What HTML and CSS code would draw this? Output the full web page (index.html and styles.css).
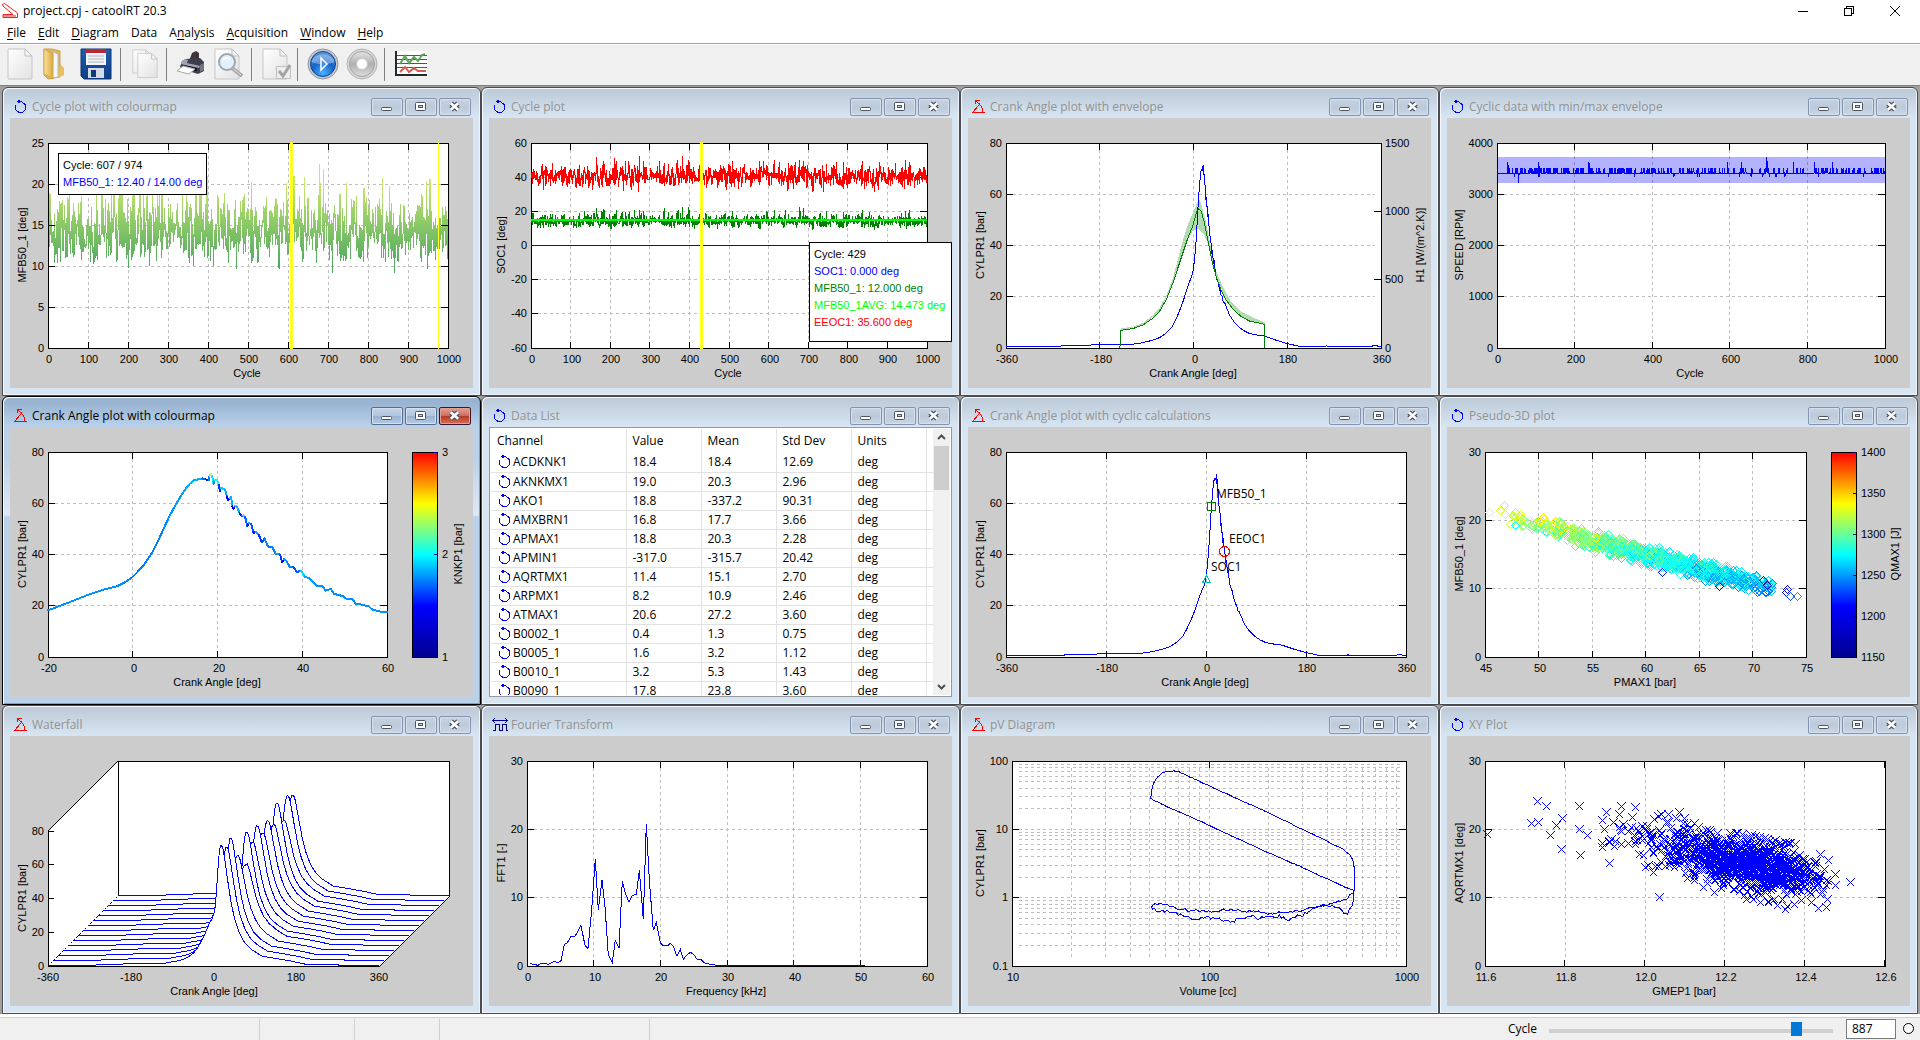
FILE: index.html
```html
<!DOCTYPE html>
<html lang="en">
<head>
<meta charset="utf-8">
<title>project.cpj - catoolRT 20.3</title>
<link rel="stylesheet" href="styles.css">
</head>
<body>
<svg class="defs" aria-hidden="true">
  <defs>
    <linearGradient id="paper" x1="0" y1="0" x2="1" y2="1"><stop offset="0" stop-color="#fff"/><stop offset="1" stop-color="#e2e2e2"/></linearGradient>
    <linearGradient id="gold" x1="0" y1="0" x2="1" y2="0"><stop offset="0" stop-color="#fbe3a0"/><stop offset="1" stop-color="#d9a83c"/></linearGradient>
    <linearGradient id="disk" x1="0" y1="0" x2="0" y2="1"><stop offset="0" stop-color="#1f5fae"/><stop offset="1" stop-color="#0d3c86"/></linearGradient>
    <radialGradient id="blueball" cx=".5" cy=".85" r=".9"><stop offset="0" stop-color="#4bb4ff"/><stop offset=".5" stop-color="#1463c8"/><stop offset="1" stop-color="#6ca6e6"/></radialGradient>
    <linearGradient id="greyball" x1="0" y1="0" x2="0" y2="1"><stop offset="0" stop-color="#e4e4e4"/><stop offset=".5" stop-color="#b0b0b0"/><stop offset="1" stop-color="#dcdcdc"/></linearGradient>
    <linearGradient id="jet" x1="0" y1="1" x2="0" y2="0"><stop offset="0" stop-color="#000090"/><stop offset=".25" stop-color="#00f"/><stop offset=".5" stop-color="#0ff"/><stop offset=".75" stop-color="#ff0"/><stop offset="1" stop-color="#f00"/></linearGradient>
    <symbol id="i-cycle" viewBox="0 0 16 16"><path d="M7.500 .5L4.500 2.500l3 2M5 2.500h3.500L12.500 6v4.500l-3 3H6l-3.500-3v-5" fill="none" stroke="#00f"/></symbol>
    <symbol id="i-crank" viewBox="0 0 16 16"><path d="M1 13.500h13M2 13l7-8.500M4.500 5v-3.500h4M5 2l5 5M9.500 6l2 4v3" fill="none" stroke="#f00"/></symbol>
    <symbol id="i-fft" viewBox="0 0 16 16"><path d="M.5 3.500h15M3 1L.5 3.500 3 6M13 1l2.500 2.500L13 6M1 13.500h2.500v-6h4v6h3v-6h4v6H16" fill="none" stroke="#000090"/></symbol>
    <symbol id="i-min" viewBox="0 0 16 16"><rect x="2.500" y="8.500" width="10" height="3" rx="1" fill="#fff" stroke="#4b5365"/></symbol>
    <symbol id="i-max" viewBox="0 0 16 16"><rect x="2.500" y="3.500" width="10" height="8" rx="1" fill="#fff" stroke="#4b5365"/><rect x="5.500" y="6.500" width="4" height="2" fill="#c4d2e2" stroke="#4b5365"/></symbol>
    <symbol id="i-close" viewBox="0 0 16 16"><path d="M4 4.500l7 6M11 4.500l-7 6" stroke="#4b5365" stroke-width="5"/><path d="M3.800 4.300l7.400 6.400M11.200 4.300l-7.400 6.400" stroke="#fff" stroke-width="2.600"/></symbol>
    <symbol id="i-page" viewBox="0 0 26 32"><path d="M1 1h17l7 7v23H1z" fill="url(#paper)" stroke="#c6c6c6"/><path d="M18 1v7h7z" fill="#f6f6f6" stroke="#bdbdbd"/></symbol>
  </defs>
</svg>

<header class="titlebar">
  <svg class="app-icon" viewBox="0 0 16 16"><path d="M.5 1.500l2-1L15.500 10v4.500H1v-3h10L1 3z" fill="#fff" stroke="#f02020"/><path d="M1 13h13" stroke="#f02020"/></svg>
  <h1>project.cpj - catoolRT 20.3</h1>
  <div class="caption">
    <button type="button" aria-label="Minimize"><svg viewBox="0 0 12 12"><path d="M1 6.500h10" stroke="#000"/></svg></button>
    <button type="button" aria-label="Restore"><svg viewBox="0 0 12 12"><path d="M1.500 3.500h7v7h-7zM3.500 3V1.500h7v7H9" fill="none" stroke="#000"/></svg></button>
    <button type="button" aria-label="Close"><svg viewBox="0 0 12 12"><path d="M1 1l10 10M11 1L1 11" stroke="#000"/></svg></button>
  </div>
</header>

<nav class="menubar">
  <button type="button"><u>F</u>ile</button><button type="button"><u>E</u>dit</button><button type="button"><u>D</u>iagram</button><button type="button">Data</button><button type="button">A<u>n</u>alysis</button><button type="button"><u>A</u>cquisition</button><button type="button"><u>W</u>indow</button><button type="button"><u>H</u>elp</button>
</nav>

<div class="toolbar">
  <button type="button" aria-label="New"><svg viewBox="0 0 32 32"><use href="#i-page" x="3" y="0" width="26" height="32"/></svg></button>
  <button type="button" aria-label="Open"><svg viewBox="0 0 32 32"><path d="M3 1h8l8 2v26l-12 2-4-4z" fill="#e0b656" stroke="#c9a24a"/><path d="M12 4l5 2v23l-6 1z" fill="#f3f6fb" stroke="#b6bcc8"/><path d="M3 1l9 5v25l-9-5z" fill="url(#gold)" stroke="#d0a648"/><path d="M19 16l4 4v7l-6 3z" fill="#e9c060"/></svg></button>
  <button type="button" aria-label="Save" class="wide"><svg viewBox="0 0 32 32"><path d="M1 1h30v30H4l-3-3z" fill="url(#disk)" stroke="#0c3474"/><path d="M6 1h20v16H6z" fill="#f2f4f6"/><path d="M6 1h20v4H6z" fill="#b52a35"/><path d="M8 8h16M8 11h16M8 14h16" stroke="#b0b5bb"/><path d="M8 20h16v10H8z" fill="#d3dbe4"/><path d="M11 22h5v7h-5z" fill="#123a78"/></svg></button>
  <i></i>
  <button type="button" aria-label="Copy"><svg viewBox="0 0 32 32"><use href="#i-page" x="3" y="1" width="20" height="25"/><use href="#i-page" x="8" y="4" width="21" height="27"/></svg></button>
  <i></i>
  <button type="button" aria-label="Print"><svg viewBox="0 0 32 32"><path d="M14 13L17 5l4-2 3 2v8z" fill="#44333a"/><path d="M7 13l4-2 14-1 4 4v9l-6 3-13-4-5-3z" fill="#3c3f49"/><path d="M7 13l3-2 3 1-1 3 13 3-1 2-14-3-4-1z" fill="#9da4b4"/><path d="M8 17l14 3v3H8z" fill="#15171c"/><path d="M8 18l12 3-6 5-12-3z" fill="#fff" stroke="#a8a8a8"/><path d="M25 17l4-2v7l-4 2z" fill="#707684"/></svg></button>
  <button type="button" aria-label="Print preview" class="round"><svg viewBox="0 0 32 32"><use href="#i-page" x="1" y="0" width="26" height="32"/><path d="M19 20l10 8" stroke="#a8a8a8" stroke-width="4"/><path d="M19 20l9 7" stroke="#e0e0e0"/><circle cx="14" cy="14" r="8" fill="#e4f0fb" stroke="#9da6b2" stroke-width="2"/><path d="M9 13c2-5 7-5 9-1-4-2-6-1-9 1" fill="#fff"/></svg></button>
  <i></i>
  <button type="button" aria-label="Validate"><svg viewBox="0 0 32 32"><use href="#i-page" x="2" y="0" width="26" height="32"/><path d="M16.500 18.500h14v12h-14z" fill="#eee" stroke="#c0c0c0"/><path d="M19 23l4 5 7-11" fill="none" stroke="#a4a4a4" stroke-width="3"/></svg></button>
  <i></i>
  <button type="button" aria-label="Start" class="round"><svg viewBox="0 0 32 32"><circle cx="16" cy="16" r="15" fill="#c9ccd2" stroke="#8c939e"/><circle cx="16" cy="16" r="12.500" fill="url(#blueball)" stroke="#0c3d8c"/><path d="M4.500 14C7 4 25 4 27.500 14 20 17 12 17 4.500 14z" fill="#fff" opacity=".35"/><path d="M14 10v12l6-6z" fill="#3c8de6" stroke="#fff" stroke-width="1.500"/></svg></button>
  <button type="button" aria-label="Stop" class="round"><svg viewBox="0 0 32 32"><circle cx="16" cy="16" r="15" fill="#d8d8d8" stroke="#b4b4b4"/><circle cx="16" cy="16" r="12.500" fill="url(#greyball)" stroke="#a4a4a4"/><circle cx="16" cy="16" r="5.500" fill="#fff" stroke="#c8c8c8"/></svg></button>
  <i></i>
  <button type="button" aria-label="Graph" class="wide"><svg viewBox="0 0 32 32"><path d="M0 3h32v25H0z" fill="#fff"/><path d="M2 7.500h30M2 11.500h30M2 15.500h30M2 19.500h30" stroke="#555"/><path d="M1 3v24h31" fill="none" stroke="#222a30" stroke-width="2"/><path d="M5 16l5-8 4 7 5-6 4 4 4-6 3-1" fill="none" stroke="#58a858" stroke-width="2"/><path d="M5 24l5-5 4 5 5-4 4 3h8" fill="none" stroke="#d86050" stroke-width="2"/></svg></button>
</div>

<main class="desktop" id="desktop">
  <section class="win" data-icon="cycle" data-title="Cycle plot with colourmap"><div class="client"><svg class="plot" id="p1"></svg>
    <div class="tip tip-cursor"><p>Cycle: 607 / 974</p><p class="c-blue">MFB50_1: 12.40 / 14.00 deg</p></div></div></section>
  <section class="win" data-icon="cycle" data-title="Cycle plot"><div class="client"><svg class="plot" id="p2"></svg>
    <div class="tip tip-values"><p>Cycle: 429</p><p class="c-blue">SOC1: 0.000 deg</p><p class="c-green">MFB50_1: 12.000 deg</p><p class="c-lime">MFB50_1AVG: 14.473 deg</p><p class="c-red">EEOC1: 35.600 deg</p></div></div></section>
  <section class="win" data-icon="crank" data-title="Crank Angle plot with envelope"><div class="client"><svg class="plot" id="p3"></svg></div></section>
  <section class="win" data-icon="cycle" data-title="Cyclic data with min/max envelope"><div class="client"><svg class="plot" id="p4"></svg></div></section>
  <section class="win active" data-icon="crank" data-title="Crank Angle plot with colourmap"><div class="client"><svg class="plot" id="p5"></svg></div></section>
  <section class="win" data-icon="cycle" data-title="Data List"><div class="client list">
    <div class="rows"><table>
      <colgroup><col class="c-name"><col class="c-num"><col class="c-num"><col class="c-num"><col class="c-num"><col></colgroup>
      <thead><tr><th>Channel</th><th>Value</th><th>Mean</th><th>Std Dev</th><th>Units</th><td></td></tr></thead>
      <tbody id="channels"></tbody>
    </table></div>
    <div class="scroll"><button type="button" aria-label="Scroll up"><svg viewBox="0 0 17 17"><path d="M5 10l3.500-3.500L12 10" fill="none" stroke="#505050" stroke-width="2"/></svg></button><div class="track"><div class="thumb"></div></div><button type="button" aria-label="Scroll down"><svg viewBox="0 0 17 17"><path d="M5 7l3.500 3.500L12 7" fill="none" stroke="#505050" stroke-width="2"/></svg></button></div>
  </div></section>
  <section class="win" data-icon="crank" data-title="Crank Angle plot with cyclic calculations"><div class="client"><svg class="plot" id="p7"></svg></div></section>
  <section class="win" data-icon="cycle" data-title="Pseudo-3D plot"><div class="client"><svg class="plot" id="p8"></svg></div></section>
  <section class="win" data-icon="crank" data-title="Waterfall"><div class="client"><svg class="plot" id="p9"></svg></div></section>
  <section class="win" data-icon="fft" data-title="Fourier Transform"><div class="client"><svg class="plot" id="p10"></svg></div></section>
  <section class="win" data-icon="crank" data-title="pV Diagram"><div class="client"><svg class="plot" id="p11"></svg></div></section>
  <section class="win" data-icon="cycle" data-title="XY Plot"><div class="client"><svg class="plot" id="p12"></svg></div></section>
</main>

<footer class="status">
  <span class="pane pane-a"></span><span class="pane pane-b"></span><span class="pane pane-c"></span><span class="pane pane-d"></span>
  <div class="cycle-box">
    <label for="cycle">Cycle</label>
    <input type="range" id="cycle" min="0" max="1000" value="887">
    <input type="text" id="cycle-no" value="887" aria-label="Cycle number">
    <input type="radio" aria-label="Follow">
  </div>
</footer>
<script src="app.js"></script>
</body>
</html>
```
FILE: styles.css
```css
* { box-sizing: border-box; }
body {
  margin: 0;
  height: 100vh;
  min-height: 700px;
  display: flex;
  flex-direction: column;
  font: 12px/16px "Open Sans", "Noto Sans", sans-serif;
  color: #000;
  background: #fff;
  overflow: hidden;
}
button { font: inherit; color: inherit; border: 0; background: none; padding: 0; }
.defs { position: absolute; width: 0; height: 0; }

.titlebar { display: flex; align-items: center; height: 22px; padding-left: 2px; gap: 5px; }
.titlebar h1 { flex: 1; margin: 0; font-size: 12px; font-weight: 400; }
.app-icon { width: 16px; height: 16px; }
.caption { display: flex; padding-right: 2px; }
.caption button { width: 46px; height: 22px; display: grid; place-items: center; }
.caption svg { width: 12px; height: 12px; shape-rendering: crispEdges; }

.menubar { display: flex; height: 21px; align-items: center; padding-left: 1px; }
.menubar button { padding: 0 6px; }
.menubar u { text-underline-offset: 2px; }

.toolbar {
  display: flex;
  align-items: center;
  height: 43px;
  padding: 0 1px 2px;
  background: #f0f0f0;
  border-top: 1px solid #a0a0a0;
  box-shadow: inset 0 1px #fff;
}
.toolbar button { width: 37px; height: 36px; display: grid; place-items: center; }
.toolbar button.wide { width: 42px; }
.toolbar button.round { width: 39px; }
.toolbar svg { width: 32px; height: 32px; }
.toolbar i { width: 1px; height: 33px; margin: 0 5px 0 3px; background: #808080; }

.desktop {
  flex: 1;
  min-height: 0;
  display: grid;
  grid-template-columns: repeat(4, minmax(0, 1fr));
  grid-template-rows: repeat(3, minmax(0, 1fr));
  padding: 1px 2px 0;
  background: #a0a0a0;
  border-top: 1px solid #808080;
  margin-top: -1px;
}
.win {
  display: flex;
  flex-direction: column;
  padding: 0 7px 7px;
  border: 1px solid #4c4c50;
  border-radius: 6px 6px 0 0;
  background: linear-gradient(#bfcddb 0, #bfcddb 4px, #d7e4f2 29px, #d7e4f2);
  box-shadow: inset 1px 1px #f4f8fc, inset -1px -1px #eef4fa;
}
.win.active {
  border-color: #000;
  background: linear-gradient(#99b4d1 0, #99b4d1 6px, #b9d1ea 29px, #b9d1ea 60px, #dfe9f5 118px, #b9d1ea 120px);
  box-shadow: inset 1px 1px #fff, inset -1px -1px #28c8d8;
}
.bar { flex: none; display: flex; align-items: center; height: 30px; padding: 8px 2px 0 3px; gap: 2px; color: #939393; }
.active .bar { color: #000; }
.bar h2 { flex: 1; margin: 0 0 0 1px; font-size: 12px; font-weight: 400; white-space: nowrap; overflow: hidden; }
.bar > svg { width: 16px; height: 16px; shape-rendering: crispEdges; }
.bar button {
  width: 32px;
  height: 18px;
  display: grid;
  place-items: center;
  border: 1px solid #8593b0;
  border-radius: 2px;
  background: linear-gradient(#c6d3e2, #bccada 50%, #c8d6e6);
  box-shadow: inset 0 0 0 1px #d5e0ec;
}
.bar button svg { width: 16px; height: 16px; }
.active .bar button { border-color: #5a6c8c; background: linear-gradient(#c3d4e8, #b0c5de 50%, #98b2d0 51%, #b4cbe4); }
.active .bar button:last-child { border-color: #431422; background: linear-gradient(#e0a298, #cf6b5a 50%, #b63a24 51%, #d3705c); box-shadow: inset 0 0 0 1px #e2a090; }

.client { flex: 1; min-height: 0; position: relative; background: #ccc; }
.plot { position: absolute; inset: 0; width: 100%; height: 100%; font: 11px "Liberation Sans", Arial, sans-serif; shape-rendering: crispEdges; overflow: hidden; }
.plot .mark { font: 12px "Open Sans", "Noto Sans", sans-serif; }
.tip { position: absolute; padding: 3px 4px; background: #fff; border: 1px solid #000; font: 11px/17px "Liberation Sans", Arial, sans-serif; white-space: nowrap; }
.tip p { margin: 0; }
.tip-cursor { left: 48px; top: 35px; }
.tip-values { right: 0; top: 124px; width: 143px; padding-bottom: 10px; }
.c-blue { color: #00f; }
.c-green { color: #008000; }
.c-lime { color: #0f0; }
.c-red { color: #f00; }

.list { display: flex; background: #fff; border: 1px solid #98999f; padding: 1px; }
.rows { flex: 1; min-width: 0; overflow: hidden; }
.rows table { table-layout: fixed; width: 100%; border-collapse: collapse; }
.c-name { width: 135px; }
.c-num { width: 75px; }
.rows th, .rows td { padding: 0 6px; text-align: left; font-weight: 400; border-right: 1px solid #e2e2e2; white-space: nowrap; overflow: hidden; }
.rows th { height: 24px; }
.rows td { height: 19px; border-bottom: 1px solid #e2e2e2; }
.rows td:last-child { border-right: 0; }
.rows thead td { border-bottom: 0; }
.rows td span { display: flex; align-items: center; height: 18px; }
.rows td svg { width: 16px; height: 16px; shape-rendering: crispEdges; }
.scroll { width: 17px; display: flex; flex-direction: column; background: #f0f0f0; }
.scroll button { height: 17px; }
.scroll svg { display: block; width: 17px; height: 17px; }
.track { flex: 1; }
.thumb { width: 15px; height: 44px; background: #cdcdcd; margin: 0 auto; }

.status { flex: none; display: flex; height: 26px; background: #f0f0f0; border-top: 3px solid #fff; box-shadow: inset 0 1px #d0d0d0; }
.pane { border-right: 1px solid #d0d0d0; margin-top: 2px; }
.pane-a { width: 260px; }
.pane-b { width: 95px; }
.pane-c { width: 85px; }
.pane-d { width: 210px; }
.cycle-box { margin-left: auto; display: flex; align-items: center; padding-right: 6px; }
.cycle-box label { margin-right: 12px; }
.cycle-box input { margin: 0; }
.cycle-box input[type="range"] { appearance: none; width: 284px; height: 14px; background: linear-gradient(#d0d0d0, #d0d0d0) 0 7px / 100% 4px no-repeat; margin-right: 13px; }
.cycle-box input[type="range"]::-webkit-slider-thumb { appearance: none; width: 11px; height: 14px; background: #0078d7; }
.cycle-box input[type="text"] { width: 50px; height: 20px; border: 1px solid #7a7a7a; padding: 0 5px; font: inherit; background: #fff; margin-right: 7px; }
.cycle-box input[type="radio"] { appearance: none; width: 11px; height: 11px; border: 1px solid #000; border-radius: 50%; background: #fff; }
```
FILE: app.js
```js
'use strict';

/* ---------- helpers ---------- */
function rng(seed) {
  return function () {
    seed = (seed + 0x6D2B79F5) | 0;
    let t = Math.imul(seed ^ (seed >>> 15), 1 | seed);
    t = (t + Math.imul(t ^ (t >>> 7), 61 | t)) ^ t;
    return ((t ^ (t >>> 14)) >>> 0) / 4294967296;
  };
}
const gauss = r => Math.sqrt(-2 * Math.log(r() + 1e-9)) * Math.cos(2 * Math.PI * r());
const lerp = (a, b, t) => a + (b - a) * t;
function interp(pts, x) {
  if (x <= pts[0][0]) return pts[0][1];
  for (let i = 1; i < pts.length; i++) {
    if (x <= pts[i][0]) return lerp(pts[i - 1][1], pts[i][1], (x - pts[i - 1][0]) / (pts[i][0] - pts[i - 1][0] || 1));
  }
  return pts[pts.length - 1][1];
}
const scan = (pts, ax, ay) => pts.map(p => [
  lerp(ax[2], ax[3], (p[0] - ax[0]) / (ax[1] - ax[0])),
  lerp(ay[2], ay[3], (p[1] - ay[0]) / (ay[1] - ay[0])), p[2]]);
const JET = [[0, 0, 144], [0, 0, 255], [0, 255, 255], [255, 255, 0], [255, 0, 0]];
function jet(t) {
  t = Math.max(0, Math.min(0.9999, t)) * 4;
  const i = Math.floor(t);
  return 'rgb(' + JET[i].map((c, k) => Math.round(lerp(c, JET[i + 1][k], t - i))).join(',') + ')';
}
const seq = (a, b, s) => { const o = []; for (let v = a; v <= b + s / 1e3; v += s) o.push(v); return o; };

/* ---------- data ---------- */
const knock = scan([[146,661,1.78],[203,640,1.78],[260,617,1.78],[320,597,1.78],[350,590,1.78],[375,578,1.76],[397,564,1.75],[430,530,1.75],[460,485,1.75],[480,445,1.75],[495,412,1.76],[512,375,1.78],[530,343,1.8],[545,318,1.8],[560,295,1.82],[572,281,1.85],[583,272,1.88],[608,266,1.8],[618,269,1.6],[628,271,1.5],[630,258,2],[634,252,2.4],[638,260,2.3],[642,282,1.6],[645,270,1.9],[653,270,2.1],[658,285,1.9],[661,304,1.3],[664,294,1.8],[677,300,2],[682,320,1.7],[686,332,1.3],[690,325,1.7],[695,322,2.2],[698,350,1.5],[702,358,1.2],[707,348,1.9],[713,352,2],[720,370,1.7],[727,380,1.4],[731,377,1.9],[737,382,2.1],[743,408,1.3],[748,400,1.7],[755,402,2],[762,430,1.3],[768,426,1.8],[778,436,1.9],[787,458,1.3],[795,446,2],[805,470,1.5],[817,470,1.95],[828,492,1.6],[842,494,2],[848,518,1.2],[853,508,1.7],[860,512,1.9],[870,530,1.6],[882,532,1.9],[891,546,1.4],[905,543,2],[915,560,1.85],[930,566,1.8],[950,587,1.78],[968,588,1.78],[978,602,1.78],[993,597,1.78],[1004,612,1.78],[1030,619,1.78],[1042,628,1.78],[1058,628,1.78],[1068,641,1.78],[1090,645,1.78],[1108,650,1.78],[1118,659,1.78],[1145,666,1.78],[1162,666,1.78]], [146,1162,-20,60], [801,187,0,80]);
const pressure = [[-360,.5],[-256,.5],[-254,.9],[-198,1],[-194,1.4],[-120,1.4],[-104,1.8],[-81,2.9],[-70,3.6],[-62,4.4],[-52,5.9],[-42,8],[-36,10.3],[-30,13],[-26,15]]
  .concat(knock.map(p => [p[0], p[1]]), [[69,12.9],[78,10.2],[88,8],[97,6.7],[107,5.7],[120,5.1],[137,4.6],[158,3.1],[180,1.7],[203,.65],[254,.6],[255,1],[257,.6],[343,.6],[345,1],[352,1],[354,.6],[360,.6]]);
const AX3 = [139,1265,-360,360], AY3 = [804,190,0,80];
const heat = scan([[481,804],[484,751],[520,746],[550,735],[580,715],[600,694],[620,660],[640,610],[655,565],[670,520],[685,475],[700,438],[712,395],[718,387],[725,395],[735,430],[745,480],[757,540],[770,590],[785,630],[800,660],[820,687],[845,710],[870,723],[916,733],[916,804]], AX3, AY3);
const heatBand = scan([[484,746],[520,740],[550,729],[580,706],[600,683],[620,648],[640,595],[655,540],[670,482],[685,435],[700,400],[718,358],[725,372],[740,430],[757,515],[770,572],[790,622],[815,665],[845,695],[880,713],[916,727],[916,733],[870,723],[845,710],[820,687],[800,660],[770,590],[750,505],[735,465],[718,448],[700,452],[685,480],[670,522],[640,612],[600,695],[550,736],[484,751]], AX3, AY3);
const fft = scan([[152,790],[160,793],[175,796],[185,790],[195,790],[205,793],[225,784],[235,788],[244,782],[254,733],[262,729],[274,710],[286,709],[304,677],[316,736],[325,745],[336,630],[347,478],[356,631],[367,541],[376,620],[386,765],[398,787],[407,721],[418,745],[428,545],[437,580],[448,607],[457,588],[470,583],[479,511],[491,658],[500,373],[509,540],[521,691],[530,667],[542,728],[551,737],[565,737],[572,730],[580,737],[592,769],[602,748],[611,778],[620,767],[632,757],[642,763],[652,778],[664,779],[674,788],[690,793],[712,796],[1155,796]], [142,1342,0,60], [798,184,0,30]);
const pvMain = [[1184,572],[1164,565],[1105,538],[1027,502],[925,458],[840,419],[748,376],[690,350],[612,316],[582,301],[574,296],[575,275],[582,250],[594,232],[606,221],[622,215],[650,214],[668,221],[748,258],[840,300],[925,338],[1027,388],[1105,425],[1150,448],[1170,464],[1180,480],[1184,500],[1184,572],[1180,615],[1170,628],[1164,642],[1155,640]];
const pvPump = [[1155,640],[1140,627],[1118,619],[1100,616],[1080,618],[1050,624],[1020,632],[985,637],[925,642],[890,635],[800,630],[748,634],[690,632],[650,625],[615,611],[580,612],[574,625]];
const pvIntake = [[574,620],[590,632],[615,633],[650,640],[690,652],[710,658],[740,652],[780,658],[812,667],[825,665],[835,650],[850,658],[880,645],[895,658],[920,648],[960,650],[985,660],[1000,650],[1030,645],[1060,625],[1085,617],[1105,615],[1130,608],[1160,595],[1184,580]];
function roughen(pts, amp, step, seed) {
  const r = rng(seed), out = [];
  for (let i = 1; i < pts.length; i++) {
    const [a, b] = [pts[i - 1], pts[i]];
    const n = Math.max(1, Math.round(Math.hypot(b[0] - a[0], b[1] - a[1]) / step));
    for (let k = 0; k < n; k++) out.push([lerp(a[0], b[0], k / n), lerp(a[1], b[1], k / n) + (r() - .5) * amp]);
  }
  out.push(pts[pts.length - 1]);
  return out;
}
const AX11 = [157,1340,1,3], AY11 = [798,184,-1,2];

const rCycle = rng(17);
const mfb = [], eeoc = [], speed = [];
for (let i = 0; i <= 1000; i++) {
  const g = gauss(rCycle);
  const v = Math.max(9, Math.min(22.4, 14.4 + 2.4 * g + .25 * (g * g - 1)));
  mfb.push([i, v]);
  eeoc.push([i, Math.max(31.5, Math.min(54, 40.5 + (v - 14.3) * 1.25 + gauss(rCycle) * 2.2))]);
  const s = rCycle();
  speed.push([i, s < .012 ? 3330 : s < .80 ? 3410 : s < .985 ? 3510 : 3620]);
}
speed[56][1] = 3225;
speed[695][1] = 3720;
speed[696][1] = 3660;

/* ---------- plotting ---------- */
class Plot {
  constructor(id, o) {
    this.el = document.getElementById(id);
    this.w = this.el.clientWidth;
    this.h = this.el.clientHeight;
    this.o = o;
    this.x0 = o.left || 38;
    this.x1 = this.w - (o.right || 25);
    this.y0 = 25;
    this.y1 = this.h - 40;
    this.out = '';
  }
  X(v) { return lerp(this.x0, this.x1, (v - this.o.x[0]) / (this.o.x[1] - this.o.x[0])); }
  Y(v) { return lerp(this.y1, this.y0, (v - this.o.y[0]) / (this.o.y[1] - this.o.y[0])); }
  add(s) { this.out += s; return this; }
  text(x, y, s, anchor, extra) { return this.add(`<text x="${Math.round(x)}" y="${Math.floor(y)}" text-anchor="${anchor}" ${extra || ''}>${s}</text>`); }
  line(d, stroke, extra) { return this.add(`<path d="${d}" fill="none" stroke="${stroke}" ${extra || ''}/>`); }
  rect(fill) { return this.add(`<rect x="${this.x0}" y="${this.y0}" width="${this.x1 - this.x0}" height="${this.y1 - this.y0}" fill="${fill}"/>`); }
  path(pts) { return 'M' + pts.map(p => this.X(p[0]).toFixed(1) + ' ' + this.Y(p[1]).toFixed(1)).join('L'); }
  grid(xs, ys) {
    this.rect('#fff');
    let d = '';
    xs.forEach(v => { const x = Math.floor(this.X(v)) + .5; d += `M${x} ${this.y0 + 7}V${this.y1 - 6}`; });
    ys.forEach(v => { const y = Math.floor(this.Y(v)) + .5; d += `M${this.x0 + 7} ${y}H${this.x1 - 6}`; });
    return this.line(d, '#bdbdbd', 'stroke-dasharray="3 3"');
  }
  frame(xt, yt, o) {
    o = o || {};
    const fmt = o.fmt || (v => v);
    let d = `M${this.x0 + .5} ${this.y0 + .5}H${this.x1 + .5}V${this.y1 + .5}H${this.x0 + .5}Z`;
    xt.forEach(v => { const x = Math.floor(this.X(v)) + .5; d += `M${x} ${this.y0}v7M${x} ${this.y1}v-6`; });
    yt.forEach(v => { const y = Math.floor(this.Y(v)) + .5; d += `M${this.x0} ${y}h7` + (o.twin ? '' : `M${this.x1} ${y}h-7`); });
    this.line(d, '#000');
    xt.forEach(v => this.text(this.X(v) + 1, this.y1 + 15, fmt(v), 'middle'));
    yt.forEach(v => this.text(this.x0 - 4, this.Y(v) + 4, (o.yfmt || (q => q))(v), 'end'));
    this.text((this.x0 + this.x1) / 2 - 1, this.y1 + 29, this.o.xt, 'middle');
    return this.side(16, this.o.yt);
  }
  side(x, s) { const y = Math.round((this.y0 + this.y1) / 2) - 1; return this.text(x, y, s, 'middle', `transform="rotate(-90 ${x} ${y})"`); }
  colourbar(ticks, lo, hi, title) {
    const bx = this.x1 + 25, h = this.y1 - this.y0;
    this.add(`<rect x="${bx + .5}" y="${this.y0 + .5}" width="25" height="${h}" fill="url(#jet)" stroke="#000"/>`);
    ticks.forEach(v => {
      const y = Math.floor(this.y1 - h * (v - lo) / (hi - lo));
      this.line(`M${bx + 22} ${y + .5}h3`, '#000090').text(bx + 30, y + 4, v, 'start');
    });
    return this.side(this.w - 11, title);
  }
  cursor(v, w) { return this.add(`<rect x="${Math.round(this.X(v)) - (w >> 1)}" y="${this.y0 - 1}" width="${w}" height="${this.y1 - this.y0 + 2}" fill="#ffff20"/>`); }
  done() { this.el.innerHTML = this.out; }
}

function draw() {
  let p;

  p = new Plot('p1', { x: [0, 1000], y: [0, 25], xt: 'Cycle', yt: 'MFB50_1 [deg]' });
  p.add(`<linearGradient id="mfbmap" gradientUnits="userSpaceOnUse" x1="0" x2="0" y1="${p.Y(10)}" y2="${p.Y(20)}"><stop offset="0" stop-color="#50a860"/><stop offset=".5" stop-color="#8ac868"/><stop offset="1" stop-color="#c8e66c"/></linearGradient>`);
  p.grid(seq(100, 900, 100), seq(5, 20, 5)).line(p.path(mfb), 'url(#mfbmap)').frame(seq(0, 1000, 100), seq(0, 25, 5)).cursor(607, 3).cursor(974, 1).done();

  p = new Plot('p2', { left: 42, x: [0, 1000], y: [-60, 60], xt: 'Cycle', yt: 'SOC1 [deg]' });
  p.grid(seq(100, 900, 100), [-40, -20, 20, 40]).frame(seq(0, 1000, 100), [-60, -40, -20, 0, 20, 40, 60])
    .line(p.path(eeoc), '#f00').line(p.path(mfb), '#008000')
    .line(p.path([[0, 15], [1000, 15]]), '#0f0', 'stroke-width="2"')
    .add(`<rect x="${p.x0 + 1}" y="${Math.floor(p.Y(0))}" width="${p.x1 - p.x0 - 1}" height="1" fill="#00f"/>`).cursor(429, 3).done();

  p = new Plot('p3', { right: 50, x: [-360, 360], y: [0, 80], xt: 'Crank Angle [deg]', yt: 'CYLPR1 [bar]' });
  p.grid([-180, 0, 180], [20, 40, 60]).add(`<path d="${p.path(heatBand)}Z" fill="#b4dab4"/>`).frame(seq(-360, 360, 180), seq(0, 80, 20), { twin: true });
  [0, 500, 1000, 1500].forEach(v => {
    const y = Math.floor(lerp(p.y1, p.y0, v / 1500));
    p.line(`M${p.x1} ${y + .5}h-7`, '#000').text(p.x1 + 4, y + 4, v, 'start');
  });
  p.side(p.w - 7, 'H1 [W/(m^2.K)]').line(p.path(pressure), '#00f').line(p.path(heat), '#008000').done();

  p = new Plot('p4', { left: 50, x: [0, 1000], y: [0, 4000], xt: 'Cycle', yt: 'SPEED [RPM]' });
  p.grid(seq(200, 800, 200), [1000, 2000, 3000]).add(`<rect x="${p.x0}" y="${p.Y(3730)}" width="${p.x1 - p.x0}" height="${p.Y(3225) - p.Y(3730)}" fill="#00f" opacity=".3"/>`)
    .frame(seq(0, 1000, 200), seq(0, 4000, 1000)).line(p.path(speed), '#00f').done();

  p = new Plot('p5', { right: 86, x: [-20, 60], y: [0, 80], xt: 'Crank Angle [deg]', yt: 'CYLPR1 [bar]' });
  p.grid([0, 20, 40], [20, 40, 60]).frame(seq(-20, 60, 20), seq(0, 80, 20));
  for (let i = 1; i < knock.length; i++) p.line(p.path([knock[i - 1], knock[i]]), jet(((knock[i - 1][2] + knock[i][2]) / 2 - 1) / 2), 'stroke-width="2" stroke-linecap="round"');
  p.colourbar([1, 2, 3], 1, 3, 'KNKP1 [bar]').done();

  p = new Plot('p7', { x: [-360, 360], y: [0, 80], xt: 'Crank Angle [deg]', yt: 'CYLPR1 [bar]' });
  p.grid([-180, 0, 180], [20, 40, 60]).frame(seq(-360, 360, 180), seq(0, 80, 20)).line(p.path(pressure), '#00f');
  [['MFB50_1', 9, 58.8], ['EEOC1', 32.4, 41.3], ['SOC1', 0, 30.5]].forEach(([name, a, v], i) => {
    const x = Math.round(p.X(a)) + .5, y = Math.round(p.Y(v)) + .5;
    p.line(i === 0 ? `M${x - 4} ${y - 4}h8v8h-8z` : i === 1 ? `M${x - 5} ${y}a5 5 0 1 0 10 0a5 5 0 1 0 -10 0` : `M${x - 4} ${y + 3}h8l-4 -7z`, ['#008000', '#f00', '#00c0c0'][i]);
    p.text(x + 4, y - 8, name, 'start', 'class="mark"');
  });
  p.done();

  p = new Plot('p8', { right: 104, x: [45, 75], y: [0, 30], xt: 'PMAX1 [bar]', yt: 'MFB50_1 [deg]' });
  p.grid(seq(50, 70, 5), [10, 20]).frame(seq(45, 75, 5), [0, 10, 20, 30]);
  const diamond = (x, y, q) => { const a = Math.round(p.X(x)) + .5, b = Math.round(p.Y(y)) + .5; p.line(`M${a - 4} ${b}l4 -4l4 4l-4 4z`, jet((q - 1150) / 250)); };
  const r8 = rng(5), trend = [[45, 21.8], [50, 19.4], [55, 17], [60, 15], [65, 12.9], [70, 10.9], [74, 9.2]];
  for (let i = 0; i < 1100; i++) {
    const x = 61.2 + 6.1 * gauss(r8);
    if (x < 47.3 || x > 72.1) continue;
    const e = Math.max(-1.5, Math.min(1.6, gauss(r8) * .65));
    diamond(x, interp(trend, x) + e, 1322 - (x - 48) * 2.9 + e * 6 + gauss(r8) * 11);
  }
  [[45.4,21.2,1335],[46.4,21.5,1330],[46.8,22.2,1318],[46.9,20.9,1335],[47.8,21.2,1320],[47.8,19.3,1275],[61.5,12.4,1220],[66.9,10.4,1210],[71,11.2,1190],[71.4,10.6,1180],[73.2,10,1180],[73.1,9.5,1200],[73.5,9,1230],[74.2,9,1250]].forEach(d => diamond(...d));
  p.colourbar(seq(1150, 1400, 50), 1150, 1400, 'QMAX1 [J]').done();

  drawWaterfall();

  p = new Plot('p10', { x: [0, 60], y: [0, 30], xt: 'Frequency [kHz]', yt: 'FFT1 [-]' });
  p.grid(seq(10, 50, 10), [10, 20]).frame(seq(0, 60, 10), [0, 10, 20, 30]).line(p.path(fft), '#00f').done();

  p = new Plot('p11', { left: 44, x: [1, 3], y: [-1, 2], xt: 'Volume [cc]', yt: 'CYLPR1 [bar]' });
  const decades = (a, b) => { const o = []; for (let d = a; d < b; d++) for (let k = 1; k < 10; k++) o.push(d + Math.log10(k)); return o.slice(1); };
  p.grid(decades(1, 3), decades(-1, 2)).frame([1, 2, 3], [-1, 0, 1, 2], { fmt: v => 10 ** v, yfmt: v => (v < 0 ? '0.1' : 10 ** v) });
  [[pvMain, 2, 8, 3], [pvPump, 7, 7, 4], [pvIntake, 9, 7, 9]].forEach(([s, amp, step, seed]) => p.line(p.path(scan(roughen(s, amp, step, seed), AX11, AY11)), '#00f'));
  p.done();

  p = new Plot('p12', { x: [11.6, 12.6], y: [0, 30], xt: 'GMEP1 [bar]', yt: 'AQRTMX1 [deg]' });
  p.grid(seq(11.8, 12.4, .2), [10, 20]).frame(seq(11.6, 12.6, .2), [0, 10, 20, 30], { fmt: v => v.toFixed(1) });
  const r12 = rng(23), mean = [[11.8, 21], [11.9, 19.8], [12, 18.6], [12.1, 17], [12.2, 15.2], [12.3, 14.2], [12.45, 12.3]];
  let d = '';
  const cross = (x, y) => { const a = Math.round(p.X(x)) + .5, b = Math.round(p.Y(y)) + .5; d += `M${a - 4} ${b - 4}l8 8M${a - 4} ${b + 4}l8 -8`; };
  for (let i = 0; i < 1000; i++) {
    const g = gauss(r12), x = 12.23 + .122 * g - .014 * (g * g - 1);
    if (x < 11.82 || x > 12.46) continue;
    cross(x, Math.max(8.5, interp(mean, x) + Math.max(-2.6, Math.min(2.4, gauss(r12))) * 1.9));
  }
  [[11.605,19.3],[11.73,24.2],[11.753,23.4],[11.715,20.9],[11.733,21.1],[11.763,19.2],[11.778,20.6],[11.793,21.6],[11.79,17.1],[11.835,23.4],[11.94,23.4],[12.085,22.6],[12.035,10.1],[12.475,13.4],[12.475,11.8],[12.513,12.3],[12.452,8.6],[12.35,8.4]].forEach(c => cross(...c));
  p.line(d, '#00f').done();
}

function drawWaterfall() {
  const p = new Plot('p9', { right: 94, x: [-360, 360], y: [0, 80], xt: 'Crank Angle [deg]', yt: '' });
  const D = 70, front = p.y1, top = p.y0 + D, { x0, x1 } = p;
  const Y = v => lerp(front, top, v / 80);
  p.add(`<path d="M${x0} ${front}V${top}L${x0 + D} ${p.y0}H${x1 + D}V${front - D}L${x1} ${front}Z" fill="#fff"/>`);
  p.line(`M${x0} ${top}L${x0 + D} ${p.y0}`, '#000');
  p.line(`M${x0} ${front}L${x0 + D} ${front - D}`, '#000', 'stroke-dasharray="2 2"');
  p.line(`M${x0 + D + .5} ${front - D}V${p.y0 + .5}H${x1 + D + .5}V${front - D + .5}L${x1 + .5} ${front + .5}H${x0 + .5}V${top}`, '#000');
  const peaks = [[71.5,16],[67.5,17],[70,15],[56.4,19],[48,26],[64.7,17],[55.6,18.500],[62.4,18],[55,19],[59.4,19],[54,21],[64,17.500],[50.5,21],[62.4,19],[59.8,19]];
  const tail = [[0,1],[4,.985],[8,.9],[14,.74],[22,.54],[30,.4],[40,.285],[52,.2],[66,.145],[90,.085],[120,.066],[150,.045],[190,.01],[345,.008]];
  const comp = pressure.filter(q => q[0] <= 0);
  for (let k = peaks.length - 1; k >= 0; k--) {
    const [pk, at] = peaks[k], pts = [];
    for (let a = -360; a <= 360; a += 2) {
      let v;
      if (a <= 0) v = interp(comp, a);
      else if (a < at) v = lerp(30, pk, (1 - Math.cos(Math.PI * a / at)) / 2);
      else v = interp(tail, a - at) * lerp(pk, 68, Math.min(1, (a - at) / 60));
      pts.push((p.X(a) + 5 * k).toFixed(1) + ' ' + (Y(v) - 5 * k).toFixed(1));
    }
    const c = 'M' + pts.join('L');
    p.add(`<path d="${c}V${front - 5 * k}H${x0 + 5 * k}Z" fill="#fff"/>`).line(c, '#00f');
  }
  p.line(`M${x0} ${front + .5}H${x1}`, '#000');
  [0, 20, 40, 60, 80].forEach(v => { const y = Math.floor(Y(v)); p.line(`M${x0} ${y + .5}h6`, '#000').text(x0 - 4, y + 4, v, 'end'); });
  seq(-360, 360, 180).forEach(v => p.text(p.X(v), front + 15, v, 'middle'));
  p.text((x0 + x1) / 2, front + 29, p.o.xt, 'middle');
  const m = Math.round((front + top) / 2) - 1;
  p.text(16, m, 'CYLPR1 [bar]', 'middle', `transform="rotate(-90 16 ${m})"`).done();
}

/* ---------- window chrome and list ---------- */
const icon = n => `<svg viewBox="0 0 16 16"><use href="#i-${n}"/></svg>`;
document.querySelectorAll('.win').forEach(w => {
  w.insertAdjacentHTML('afterbegin', `<header class="bar">${icon(w.dataset.icon)}<h2>${w.dataset.title}</h2>` +
    [['min', 'Minimize'], ['max', 'Maximize'], ['close', 'Close']].map(([n, l]) => `<button type="button" aria-label="${l}">${icon(n)}</button>`).join('') + '</header>');
});
document.getElementById('channels').innerHTML = `ACDKNK1 18.4 18.4 12.69
AKNKMX1 19.0 20.3 2.96
AKO1 18.8 -337.2 90.31
AMXBRN1 16.8 17.7 3.66
APMAX1 18.8 20.3 2.28
APMIN1 -317.0 -315.7 20.42
AQRTMX1 11.4 15.1 2.70
ARPMX1 8.2 10.9 2.46
ATMAX1 20.6 27.2 3.60
B0002_1 0.4 1.3 0.75
B0005_1 1.6 3.2 1.12
B0010_1 3.2 5.3 1.43
B0090_1 17.8 23.8 3.60`.split('\n').map(l => {
  const [n, ...v] = l.split(' ');
  return `<tr><td><span>${icon('cycle')}${n}</span></td>${v.map(x => `<td>${x}</td>`).join('')}<td>deg</td><td></td></tr>`;
}).join('');
draw();
window.addEventListener('resize', draw);
```
